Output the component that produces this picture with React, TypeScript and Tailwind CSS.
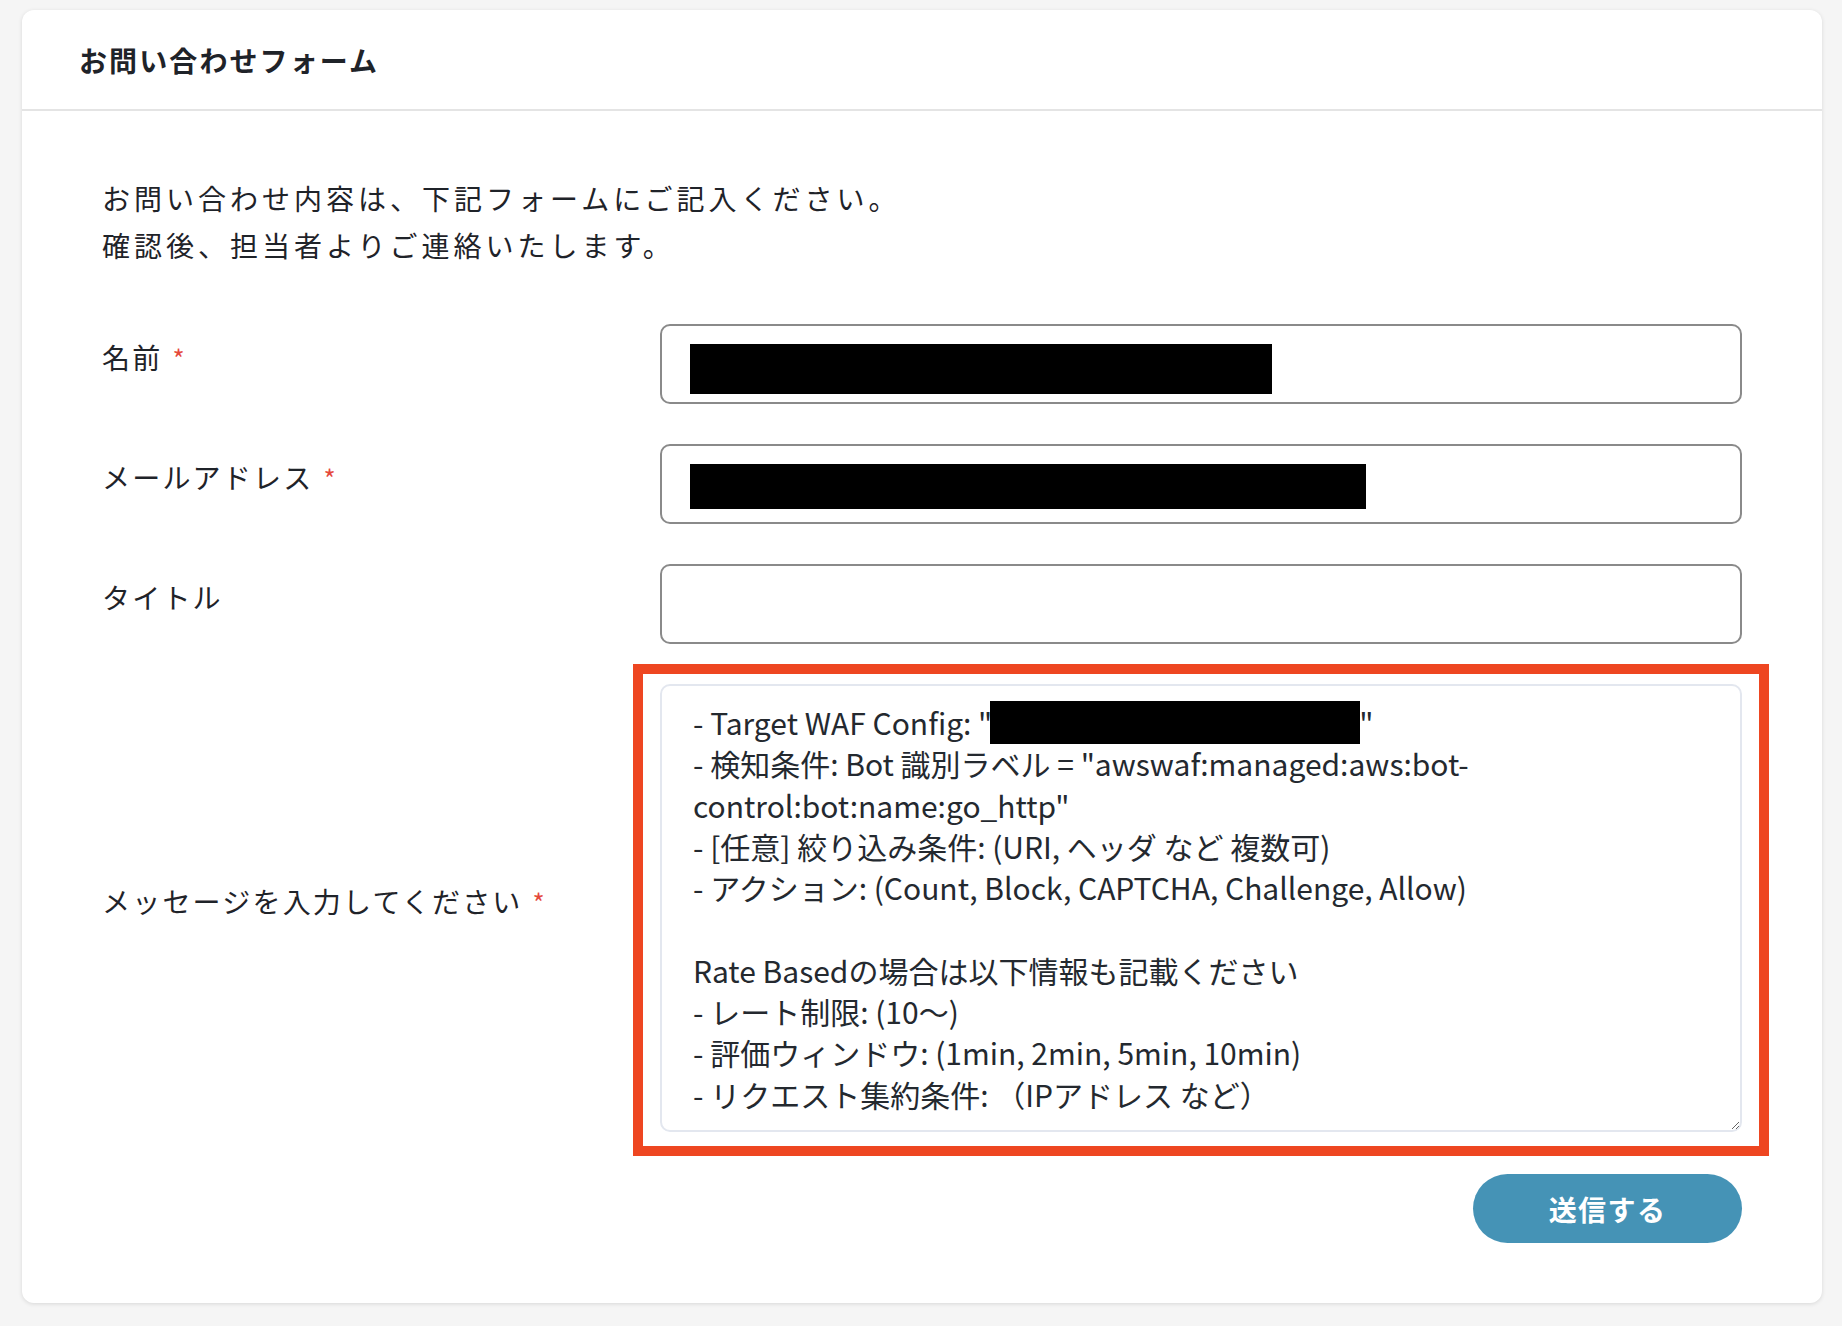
import { useState } from "react";

const message = [
     '- Target WAF Config: "xxxxxxxxxxxxxxxxxxxxxxxxi"',
     '- 検知条件: Bot 識別ラベル = "awswaf:managed:aws:bot-',
     'control:bot:name:go_http"',
     "- [任意] 絞り込み条件: (URI, ヘッダ など 複数可)",
     "- アクション: (Count, Block, CAPTCHA, Challenge, Allow)",
     "",
     "Rate Basedの場合は以下情報も記載ください",
     "- レート制限: (10〜)",
     "- 評価ウィンドウ: (1min, 2min, 5min, 10min)",
     "- リクエスト集約条件: （IPアドレス など）",
].join("\n");

function Required() {
     return (
          <span className="ml-[10px] text-[26px] text-[#e5483b]">*</span>
     );
}

export default function App() {
     const [body, setBody] = useState(message);

     return (
          <div className="min-h-screen bg-[#f5f5f5] pt-[10px] pl-[22px] pr-[20px] pb-[23px] font-['Noto_Sans_CJK_JP',sans-serif] text-[#1f2329]">
               <div className="rounded-xl bg-white shadow-[0_1px_4px_rgba(0,0,0,0.12)]">
                    <div className="flex h-[101px] items-center border-b-2 border-[#e4e4e4] pl-[57px]">
                         <h1 className="text-[28px] font-bold tracking-[2.1px]">
                              お問い合わせフォーム
                         </h1>
                    </div>

                    <div className="pl-[80px] pr-[80px] pt-[64px] pb-[60px]">
                         <p className="text-[28px] leading-[47px] tracking-[4px]">
                              お問い合わせ内容は、下記フォームにご記入ください。
                              <br />
                              確認後、担当者よりご連絡いたします。
                         </p>

                         <div className="mt-[55px] flex flex-col gap-[40px]">
                              <div className="flex items-center">
                                   <label className="mb-[14px] w-[558px] text-[28px] leading-[47px] tracking-[2.2px]">
                                        名前
                                        <Required />
                                   </label>
                                   <div className="flex h-[80px] flex-1 items-start rounded-[10px] border-2 border-[#8a8a8a] pl-[28px] pt-[18px]">
                                        <span className="h-[50px] w-[582px] bg-black" />
                                   </div>
                              </div>

                              <div className="flex items-center">
                                   <label className="mb-[14px] w-[558px] text-[28px] leading-[47px] tracking-[2.2px]">
                                        メールアドレス
                                        <Required />
                                   </label>
                                   <div className="flex h-[80px] flex-1 items-start rounded-[10px] border-2 border-[#8a8a8a] pl-[28px] pt-[18px]">
                                        <span className="h-[45px] w-[676px] bg-black" />
                                   </div>
                              </div>

                              <div className="flex items-center">
                                   <label className="mb-[14px] w-[558px] text-[28px] leading-[47px] tracking-[2.2px]">
                                        タイトル
                                   </label>
                                   <input
                                        type="text"
                                        className="h-[80px] flex-1 rounded-[10px] border-2 border-[#8a8a8a] px-[28px] text-[28px] outline-none"
                                   />
                              </div>

                              <div className="flex items-center">
                                   <label className="mb-[14px] w-[558px] text-[28px] leading-[47px] tracking-[2.2px]">
                                        メッセージを入力してください
                                        <Required />
                                   </label>
                                   <div className="relative flex-1">
                                        <textarea
                                             value={body}
                                             onChange={(e) => setBody(e.target.value)}
                                             rows={10}
                                             className="block h-[448px] w-full resize-y rounded-[10px] border-2 border-[#e3e7ef] px-[31px] py-[16px] text-[30px] leading-[41.3px] text-[#24292f] outline-none"
                                        />
                                        {/* redacted config name */}
                                        <div className="absolute left-[330px] top-[17px] h-[43px] w-[370px] bg-black" />
                                        {/* highlight annotation */}
                                        <div className="pointer-events-none absolute -left-[27px] -right-[27px] -top-[20px] -bottom-[24px] border-[10px] border-[#ee4621]" />
                                   </div>
                              </div>
                         </div>

                         <div className="mt-[42px] flex justify-end">
                              <button className="h-[69px] w-[269px] rounded-full bg-[#4593b6] text-[28px] font-bold tracking-[0.05em] text-white">
                                   送信する
                              </button>
                         </div>
                    </div>
               </div>
          </div>
     );
}
